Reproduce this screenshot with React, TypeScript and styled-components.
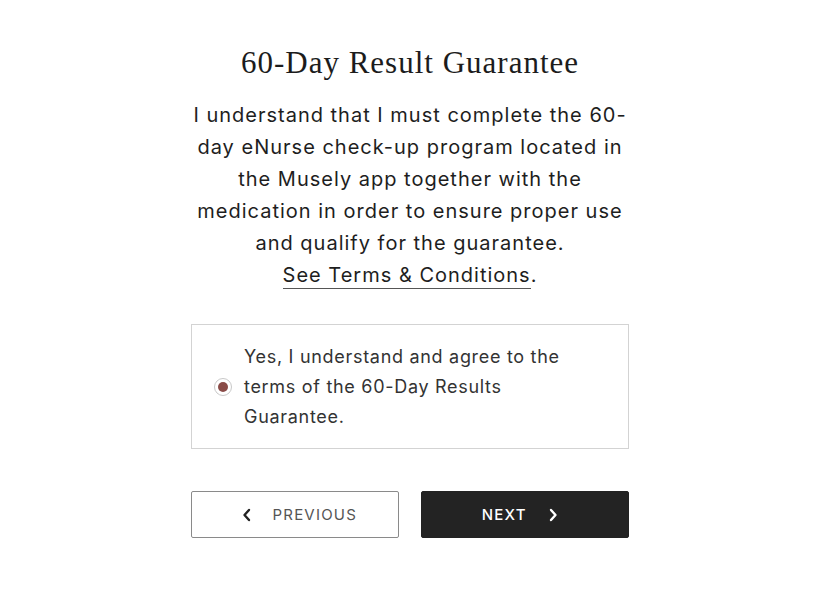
import React from "react";
import styled, { createGlobalStyle } from "styled-components";

const Global = createGlobalStyle`
  html, body { margin: 0; padding: 0; background: #fff; }
  body { width: 820px; }
`;

const Page = styled.main`
  display: flex;
  flex-direction: column;
  align-items: center;
  padding-top: 43px;
`;

const Column = styled.div`
  width: 438px;
  display: flex;
  flex-direction: column;
  align-items: stretch;
`;

const Title = styled.h1`
  margin: 0;
  font-family: "Liberation Serif", "DejaVu Serif", serif;
  font-weight: 400;
  font-size: 31px;
  letter-spacing: 1px;
  line-height: 40px;
  color: #1c1c1c;
  text-align: center;
`;

const Body = styled.p`
  margin: 16px -4px 0;
  font-family: Inter, "Noto Sans", sans-serif;
  font-size: 20px;
  letter-spacing: 1px;
  line-height: 32px;
  color: #1e1e1e;
  text-align: center;
`;

const TermsLink = styled.a`
  color: #1e1e1e;
  text-decoration: none;
  border-bottom: 1px solid #555;
  padding-bottom: 1px;
`;

const Option = styled.label`
  margin-top: 33px;
  border: 1px solid #d3d3d3;
  display: flex;
  align-items: center;
  gap: 12px;
  padding: 17px 20px 16px 22px;
  cursor: pointer;
`;

const Radio = styled.span<{ $checked: boolean }>`
  flex: 0 0 auto;
  width: 18px;
  height: 18px;
  border-radius: 50%;
  border: 1.5px solid #c8c8c8;
  box-sizing: border-box;
  display: flex;
  align-items: center;
  justify-content: center;
  &::after {
    content: "";
    width: 10px;
    height: 10px;
    border-radius: 50%;
    background: ${(p) => (p.$checked ? "#8a4c48" : "transparent")};
  }
`;

const OptionText = styled.span`
  font-family: Inter, "Noto Sans", sans-serif;
  font-size: 18px;
  letter-spacing: 0.7px;
  line-height: 30px;
  color: #333;
`;

const Actions = styled.div`
  margin-top: 42px;
  display: flex;
  gap: 22px;
`;

const Button = styled.button<{ $primary?: boolean }>`
  flex: 1;
  height: 47px;
  display: flex;
  align-items: center;
  justify-content: center;
  gap: 21px;
  padding: ${(p) => (p.$primary ? "0 10px 0 0" : "0 0 0 9px")};
  font-family: Inter, "Noto Sans", sans-serif;
  font-size: 15px;
  letter-spacing: 1.2px;
  text-transform: uppercase;
  border-radius: 2px;
  cursor: pointer;
  border: 1px solid ${(p) => (p.$primary ? "#222" : "#8a8a8a")};
  background: ${(p) => (p.$primary ? "#232323" : "#fff")};
  color: ${(p) => (p.$primary ? "#fff" : "#555")};
  font-weight: ${(p) => (p.$primary ? 500 : 400)};
`;

const Chevron = ({ dir, color }: { dir: "left" | "right"; color: string }) => (
  <svg width="10" height="14" viewBox="0 0 10 14" fill="none">
    <path
      d={dir === "left" ? "M7 2 L2.5 7 L7 12" : "M3 2 L7.5 7 L3 12"}
      stroke={color}
      strokeWidth="2.4"
      strokeLinecap="round"
      strokeLinejoin="round"
    />
  </svg>
);

export default function App() {
  return (
    <>
      <Global />
      <Page>
        <Column>
          <Title>60-Day Result Guarantee</Title>
          <Body>
            I understand that I must complete the 60-day eNurse check-up program located in the
            Musely app together with the medication in order to ensure proper use and qualify for
            the guarantee.
            <br />
            <TermsLink href="#">See Terms &amp; Conditions</TermsLink>.
          </Body>
          <Option>
            <Radio $checked />
            <OptionText>
              Yes, I understand and agree to the terms of the 60-Day Results Guarantee.
            </OptionText>
          </Option>
          <Actions>
            <Button>
              <Chevron dir="left" color="#222" />
              Previous
            </Button>
            <Button $primary>
              Next
              <Chevron dir="right" color="#fff" />
            </Button>
          </Actions>
        </Column>
      </Page>
    </>
  );
}
